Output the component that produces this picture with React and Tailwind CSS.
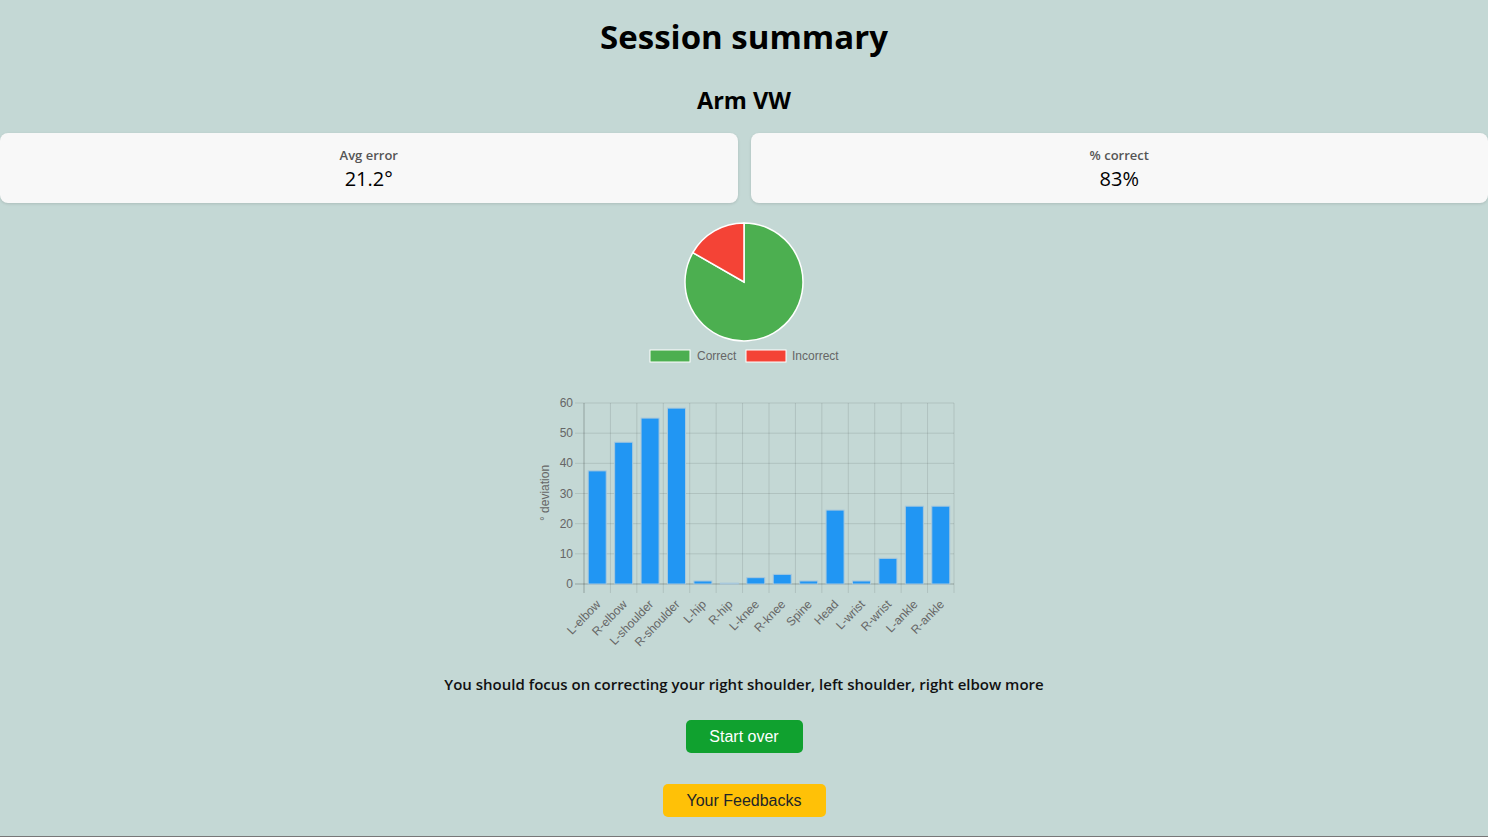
const joints = [
    { name: 'L-elbow', v: 37.5 },
    { name: 'R-elbow', v: 47 },
    { name: 'L-shoulder', v: 55 },
    { name: 'R-shoulder', v: 58.3 },
    { name: 'L-hip', v: 1 },
    { name: 'R-hip', v: 0.3 },
    { name: 'L-knee', v: 2.1 },
    { name: 'R-knee', v: 3.2 },
    { name: 'Spine', v: 1 },
    { name: 'Head', v: 24.5 },
    { name: 'L-wrist', v: 1 },
    { name: 'R-wrist', v: 8.5 },
    { name: 'L-ankle', v: 25.8 },
    { name: 'R-ankle', v: 25.8 },
];

const chartFont = '"Liberation Sans", Arial, sans-serif';

function StatCard({ label, value }) {
    return (
        <div className="h-[70px] rounded-lg bg-[#f8f8f8] pt-[14px] text-center shadow-[0_1px_3px_rgba(0,0,0,0.12)]">
            <div className="text-[13px] font-semibold leading-4 text-[#555]">{label}</div>
            <div className="mt-[4px] text-[20px] font-medium leading-6 text-black">{value}</div>
        </div>
    );
}

function PieChart() {
    // 83% correct, slice starts at the top and runs clockwise
    const cx = 120;
    const cy = 69;
    const r = 59;
    const a = (-90 + 0.833 * 360) * (Math.PI / 180);
    const px = cx + r * Math.cos(a);
    const py = cy + r * Math.sin(a);
    return (
        <svg width="240" height="160" className="block">
            <path
                d={`M${cx},${cy} L${cx},${cy - r} A${r},${r} 0 1 1 ${px},${py} Z`}
                fill="#4caf50"
                stroke="#fff"
                strokeWidth="1.5"
            />
            <path
                d={`M${cx},${cy} L${px},${py} A${r},${r} 0 0 1 ${cx},${cy - r} Z`}
                fill="#f44336"
                stroke="#fff"
                strokeWidth="1.5"
            />
            <rect x="26" y="137" width="40" height="12" fill="#4caf50" stroke="#fff" strokeWidth="1" />
            <text x="73" y="147" fontSize="12" fill="#666" fontFamily={chartFont}>
                Correct
            </text>
            <rect x="122" y="137" width="40" height="12" fill="#f44336" stroke="#fff" strokeWidth="1" />
            <text x="168" y="147" fontSize="12" fill="#666" fontFamily={chartFont}>
                Incorrect
            </text>
        </svg>
    );
}

function BarChart() {
    const left = 60;
    const right = 430;
    const top = 13;
    const bottom = 194;
    const step = (right - left) / joints.length;
    const unit = (bottom - top) / 60;
    const grid = 'rgba(0,0,0,0.1)';
    return (
        <svg width="440" height="260" className="block">
            {[0, 10, 20, 30, 40, 50, 60].map((t) => {
                const y = bottom - t * unit;
                return (
                    <g key={t}>
                        <line x1={left - 9} x2={right} y1={y} y2={y} stroke={t === 0 ? 'rgba(0,0,0,0.25)' : grid} />
                        <text
                            x={left - 11}
                            y={y + 4}
                            textAnchor="end"
                            fontSize="12"
                            fill="#666"
                            fontFamily={chartFont}
                        >
                            {t}
                        </text>
                    </g>
                );
            })}
            {joints.map((j, i) => {
                const x = left + i * step;
                return <line key={j.name} x1={x} x2={x} y1={top} y2={bottom + 9} stroke={i === 0 ? 'rgba(0,0,0,0.25)' : grid} />;
            })}
            <line x1={right} x2={right} y1={top} y2={bottom + 9} stroke={grid} />
            {joints.map((j, i) => {
                const cx = left + i * step + step / 2;
                const h = j.v * unit;
                return (
                    <rect
                        key={j.name}
                        x={cx - 9}
                        y={bottom - h}
                        width="18"
                        height={h}
                        fill="#2196f3"
                        stroke="#a8c8dc"
                        strokeWidth="1"
                    />
                );
            })}
            {joints.map((j, i) => {
                const cx = left + i * step + step / 2;
                return (
                    <text
                        key={j.name}
                        transform={`translate(${cx + 1},${bottom + 18}) rotate(-46)`}
                        textAnchor="end"
                        fontSize="12"
                        fill="#666"
                        fontFamily={chartFont}
                        dy="0.35em"
                    >
                        {j.name}
                    </text>
                );
            })}
            <text
                transform="translate(25,103) rotate(-90)"
                textAnchor="middle"
                fontSize="12"
                fill="#666"
                fontFamily={chartFont}
            >
                ° deviation
            </text>
        </svg>
    );
}

export default function App() {
    return (
        <div className="min-h-[837px] border-b border-[#777] bg-[#c4d8d5] font-['Open_Sans','Noto_Sans',sans-serif] text-black">
            <h1 className="pt-[19px] text-center text-[33px] font-bold leading-9">Session summary</h1>
            <h2 className="mt-[30px] text-center text-[23.5px] font-bold leading-[30px]">Arm VW</h2>

            <div className="mt-[18px] grid grid-cols-2 gap-[13px]">
                <StatCard label="Avg error" value="21.2°" />
                <StatCard label="% correct" value="83%" />
            </div>

            <div className="mt-[10px] flex justify-center">
                <PieChart />
            </div>

            <div className="mt-[17px] flex justify-center">
                <BarChart />
            </div>

            <p className="mt-[24px] text-center text-[15px] font-semibold leading-5 text-[#111]">
                You should focus on correcting your right shoulder, left shoulder, right elbow more
            </p>

            <div className="mt-[26px] flex flex-col items-center gap-[31px] pb-[18px] font-['Liberation_Sans',Arial,sans-serif]">
                <button className="h-[33px] w-[117px] rounded-[5px] bg-[#10a12f] text-[16px] text-white">Start over</button>
                <button className="h-[33px] w-[163px] rounded-[5px] bg-[#ffc107] text-[16px] text-[#212529]">
                    Your Feedbacks
                </button>
            </div>
        </div>
    );
}
